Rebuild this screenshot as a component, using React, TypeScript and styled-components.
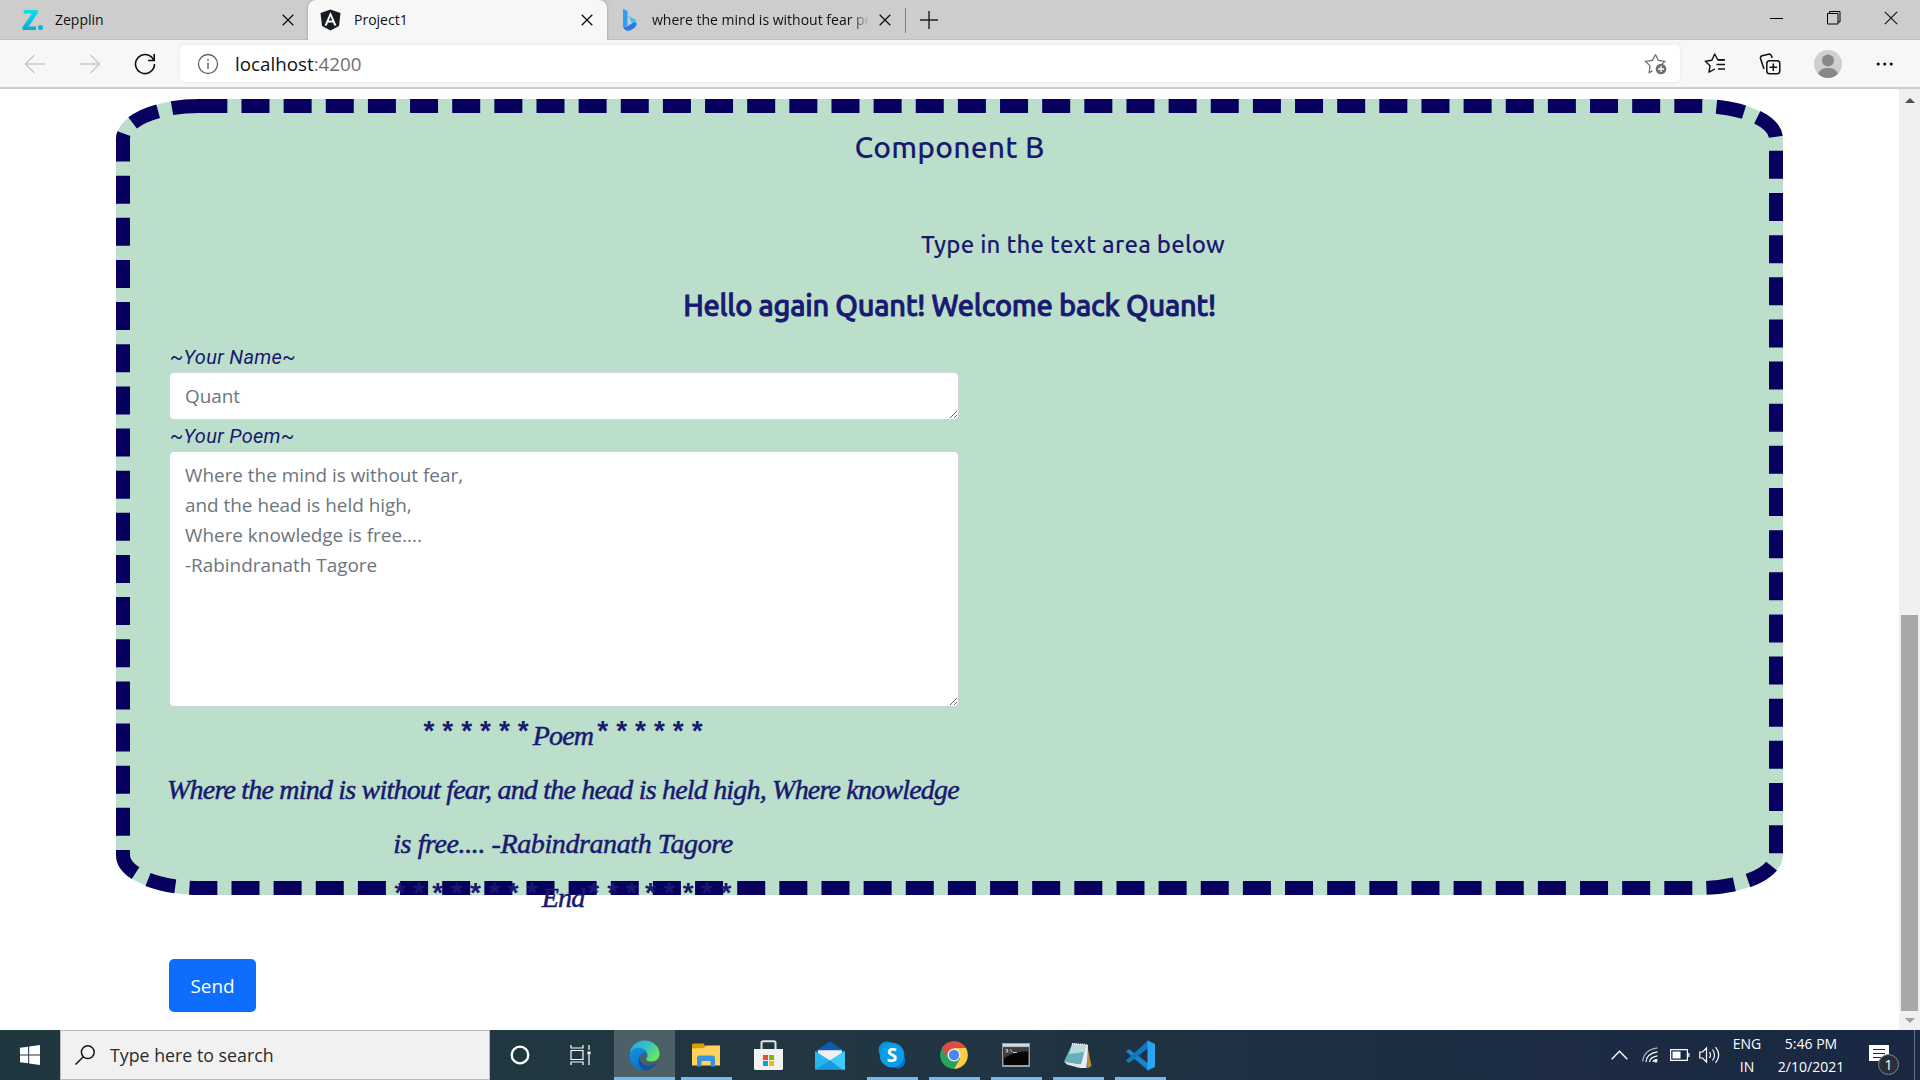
import React from "react";
import styled, { createGlobalStyle } from "styled-components";

const segoe = `"Segoe UI", "Open Sans", "Noto Sans", sans-serif`;
const ubuntu = `Ubuntu, "Noto Sans", sans-serif`;

const GlobalStyle = createGlobalStyle`
  *, *::before, *::after { box-sizing: border-box; }
  body { margin: 0; background: #fff; overflow: hidden; }
  svg { display: block; flex: none; }
`;

const Screen = styled.div`
  width: 1920px;
  height: 1080px;
  display: flex;
  flex-direction: column;
  overflow: hidden;
  font-family: ${segoe};
`;

/* ---------- Tab strip ---------- */

const TabStrip = styled.header`
  height: 40px;
  flex: none;
  display: flex;
  background: #cdcdcd;
  box-shadow: inset 0 -1px 0 #bdbdbd;
`;

const Tab = styled.div<{ $active?: boolean; $width: number; $padLeft: number }>`
  width: ${(p) => p.$width}px;
  height: 40px;
  display: flex;
  align-items: center;
  padding: 0 14px 0 ${(p) => p.$padLeft}px;
  border-radius: 8px 8px 0 0;
  color: #101010;
  background: ${(p) => (p.$active ? "#f7f7f7" : "transparent")};
  box-shadow: ${(p) => (p.$active ? "0 0 3px rgba(0,0,0,.3)" : "none")};
  clip-path: inset(-4px -4px 0 -4px);
`;

const TabTitle = styled.span<{ $fade?: boolean }>`
  flex: 1;
  min-width: 0;
  white-space: nowrap;
  font-size: 14px;
  line-height: 20px;
  mask-image: ${(p) => (p.$fade ? "linear-gradient(90deg, #000 200px, transparent 217px)" : "none")};
`;

const FavIcon = styled.div<{ $gap: number }>`
  margin-right: ${(p) => p.$gap}px;
`;

const TabDivider = styled.div`
  width: 1px;
  height: 25px;
  margin: 8px 14px 0 0;
  background: #7d7d7d;
`;

const NewTab = styled.div`
  margin-top: 11px;
`;

const WindowControls = styled.div`
  margin: 0 1px 0 auto;
  display: grid;
  grid-template-columns: repeat(3, 57px);
  height: 36px;
  place-items: center;
`;

/* ---------- Toolbar ---------- */

const Toolbar = styled.nav`
  height: 49px;
  flex: none;
  display: flex;
  align-items: flex-start;
  padding: 5px 20px 0 24px;
  background: #f7f7f7;
  border-bottom: 2px solid #cdcdcd;
`;

const NavButtons = styled.div`
  height: 37px;
  width: 156px;
  display: flex;
  align-items: center;
  gap: 33px;
`;

const AddressBar = styled.div`
  width: 1500px;
  height: 37px;
  display: flex;
  align-items: center;
  padding: 0 12px 0 17px;
  border-radius: 5px;
  background: #fff;
  box-shadow: 0 0 4px rgba(0, 0, 0, 0.08);
`;

const Url = styled.span`
  flex: 1;
  margin-left: 16px;
  font-size: 18.8px;
  line-height: 28px;
  color: #101010;
`;

const Port = styled.span`
  color: #6f6f6f;
`;

const ToolbarActions = styled.div`
  height: 37px;
  margin-left: 24px;
  display: grid;
  grid-template-columns: 22px 24px 28px 20px;
  column-gap: 32px;
  align-items: center;
  justify-items: end;
`;

/* ---------- Page ---------- */

const Viewport = styled.div`
  height: 941px;
  flex: none;
  display: flex;
  background: #fff;
`;

const Page = styled.main`
  flex: 1;
  padding: 10px 0 0 116px;
`;

const ComponentBox = styled.section`
  position: relative;
  isolation: isolate;
  width: 1667px;
  height: 796px;
  border: 14px solid transparent;
  border-radius: 5%;
  background: #bbdfca border-box;
  color: #191970;
`;

const DashedOutline = styled.svg`
  position: absolute;
  z-index: -1;
  inset: -14px;
`;

const Title = styled.h2`
  margin: 16px 0 0;
  text-align: center;
  font: 500 30px/36px ${ubuntu};
  letter-spacing: 0.2px;
`;

const Hint = styled.h4`
  margin: 65px 0 0 247px;
  text-align: center;
  font: 500 24px/30px ${ubuntu};
  letter-spacing: 0.2px;
`;

const Greeting = styled.h3`
  margin: 27px 0 0;
  text-align: center;
  font: 500 29px/36px ${ubuntu};
  letter-spacing: -0.27px;
  -webkit-text-stroke: 0.9px #191970;
`;

const Form = styled.form`
  width: 790px;
  margin: 18px 0 0 39px;
  display: flex;
  flex-direction: column;
`;

const Label = styled.label<{ $height: number }>`
  height: ${(p) => p.$height}px;
  display: flex;
  align-items: center;
  padding-left: 1px;
  font: italic 400 20px/24px Roboto, sans-serif;
  letter-spacing: 0.3px;
`;

const Field = styled.textarea<{ $height: number }>`
  display: block;
  width: 790px;
  height: ${(p) => p.$height}px;
  margin: 0;
  padding: 8px 15px;
  border: 1px solid #ced4da;
  border-radius: 5px;
  background: #fff;
  font: 400 18.9px/30px ${segoe};
  overflow: hidden;
  resize: both;
  &::placeholder { color: #6c757d; opacity: 1; }
`;

const Poem = styled.div`
  margin: 2px -10px 0;
  font: italic 400 28px/54px "Rancho", "Liberation Serif", serif;
  -webkit-text-stroke: 0.5px #191970;
`;

const PoemLine = styled.p<{ $spacing?: number }>`
  height: 54px;
  margin: 0 2px 0 0;
  display: flex;
  align-items: baseline;
  justify-content: center;
  gap: 4px;
  white-space: nowrap;
  letter-spacing: ${(p) => p.$spacing ?? -0.8}px;
`;

const Stars = styled.span`
  font: 700 28px/50px "Liberation Sans", sans-serif;
  letter-spacing: 0;
  word-spacing: 0.2px;
  -webkit-text-stroke: 0;
  transform: translateY(-5px);
`;

const SendButton = styled.button`
  width: 87px;
  height: 53px;
  margin: 34px 0 0;
  padding: 0;
  border: 0;
  border-radius: 5px;
  background: #0d6efd;
  color: #fff;
  font: 400 18.9px/30px ${segoe};
`;

const Scrollbar = styled.div`
  width: 21px;
  display: flex;
  flex-direction: column;
  align-items: center;
  padding: 9px 0 7px;
  background: #f0f0f0;
`;

const Arrow = styled.div<{ $down?: boolean }>`
  border: 5px solid transparent;
  border-top: ${(p) => (p.$down ? "5px solid #a0a0a0" : "0")};
  border-bottom: ${(p) => (p.$down ? "0" : "5px solid #505050")};
`;

const Thumb = styled.div`
  width: 17px;
  height: 396px;
  margin: auto 0 7px;
  background: #a8a8a8;
`;

/* ---------- Taskbar ---------- */

const Taskbar = styled.footer`
  height: 50px;
  flex: none;
  display: flex;
  align-items: stretch;
  color: #fff;
  background: linear-gradient(90deg, #20373f 0%, #213641 45%, #1d2d42 75%, #192743 100%);
`;

const Slot = styled.div<{ $width: number; $after?: number }>`
  width: ${(p) => p.$width}px;
  margin-right: ${(p) => p.$after ?? 0}px;
  display: grid;
  place-items: center;
`;

const SearchBox = styled.div`
  width: 430px;
  display: flex;
  align-items: center;
  padding-left: 14px;
  gap: 15px;
  background: #f1f1f1;
  border: 1px solid #b9b9b9;
  color: #2b2b2b;
  font-size: 17.8px;
`;

const AppTile = styled.div<{ $active?: boolean; $open?: boolean }>`
  width: ${(p) => (p.$active ? 61 : 62)}px;
  display: grid;
  place-items: center;
  background:
    ${(p) =>
      p.$open || p.$active
        ? `linear-gradient(#76b9ed, #76b9ed) center bottom / ${p.$active ? 61 : 51}px 3px no-repeat`
        : "none"},
    ${(p) => (p.$active ? "linear-gradient(#4d6068, #4d6068)" : "none")};
`;

const Tray = styled.div`
  margin-left: auto;
  display: flex;
`;

const TrayText = styled.div<{ $width: number }>`
  width: ${(p) => p.$width}px;
  padding-top: 2px;
  text-align: center;
  font-size: 14px;
  line-height: 23px;
`;

const Notifications = styled.div`
  position: relative;
  width: 61px;
  padding: 15px 0 0 16px;
`;

const Badge = styled.span`
  position: absolute;
  left: 25px;
  top: 24px;
  width: 21px;
  height: 21px;
  border: 1px solid #7f8790;
  border-radius: 50%;
  background: #2b2f38;
  text-align: center;
  font-size: 14px;
  line-height: 19px;
`;

const ShowDesktop = styled.div`
  width: 6px;
  border-left: 1px solid #66708a;
`;

const CloseIcon = ({ size = 12, stroke = 1.3 }: { size?: number; stroke?: number }) => (
  <svg width={size} height={size} viewBox="0 0 12 12" stroke="#101010" strokeWidth={stroke}>
    <path d="M.7.7l10.6 10.6M11.3.7L.7 11.3" />
  </svg>
);

const apps: { name: string; active?: boolean; open?: boolean; icon: React.ReactNode }[] = [
  {
    name: "Edge",
    active: true,
    open: true,
    icon: (
      <svg width="31" height="31" viewBox="0 0 31 31">
        <defs>
          <linearGradient id="edgeTop" x1="0" y1="0" x2="1" y2=".6">
            <stop offset="0" stopColor="#2aa7e0" />
            <stop offset=".55" stopColor="#35c1c8" />
            <stop offset="1" stopColor="#66eb5a" />
          </linearGradient>
          <linearGradient id="edgeLeft" x1="0" y1="0" x2=".4" y2="1">
            <stop offset="0" stopColor="#1993d8" />
            <stop offset="1" stopColor="#0675d2" />
          </linearGradient>
        </defs>
        <path d="M.8 13C2 5.500 8 .5 15.500 .5 24 .5 30.500 6.500 30.500 13.500c0 5-3.500 8-8 8-4 0-6-1.500-5-3 2.500-3 .5-8.500-5-9C7.500 9 3 10 .8 13z" fill="url(#edgeTop)" />
        <path d="M.6 15C1 10.500 5 7.800 9.500 7.800c5 0 9 3 9 7.200-1-2-3-2.500-4.500-2C9.500 15 9.500 25 18 28.500c1.500.8 1 1.500-2 1.600C7 30.500.1 23.500.6 15z" fill="url(#edgeLeft)" />
        <path d="M11.500 14.500c-3 5 1 10.500 7 11 4 .3 7.500-1.500 9.500-3.200-2 4.500-6.500 8-11.500 8.200C10.500 30 7 20 11.500 14.500z" fill="#0c55a6" />
      </svg>
    ),
  },
  {
    name: "File Explorer",
    open: true,
    icon: (
      <svg width="28" height="25" viewBox="0 0 28 25">
        <path d="M0 2a1.500 1.500 0 011.500-1.500h10L13.500 3v4H0z" fill="#dd9b08" />
        <path d="M0 5.500L12 5l2-2.500h14V22.500H0z" fill="#ffd35c" />
        <path d="M5 23.500V15q0-2.500 2.500-2.500h13Q23 12.500 23 15v8.500h-4.500V18h-9v5.500z" fill="#3b93dd" />
      </svg>
    ),
  },
  {
    name: "Microsoft Store",
    icon: (
      <svg width="29" height="31" viewBox="0 0 29 31">
        <path d="M7.500 12V2.800q0-1.600 1.600-1.600h10.800q1.600 0 1.600 1.600V12" fill="none" stroke="#e4e4e4" strokeWidth="2" />
        <path d="M0 9h29v19.500q0 1.500-1.500 1.500h-26Q0 30 0 28.500z" fill="#f2f2f2" />
        <path d="M9 15h5v5H9z" fill="#f04e23" />
        <path d="M15 15h5v5h-5z" fill="#7fba00" />
        <path d="M9 21h5v5H9z" fill="#00a3ee" />
        <path d="M15 21h5v5h-5z" fill="#ffb800" />
      </svg>
    ),
  },
  {
    name: "Mail",
    icon: (
      <svg width="30" height="29" viewBox="0 0 30 29">
        <path d="M0 10L15 .5 30 10v5H0z" fill="#0a5cb4" />
        <path d="M3 9.500h24V18L15 22 3 18z" fill="#f1f1f3" />
        <path d="M0 10l15 9.500L30 10v18.500H0z" fill="#2bb5ee" />
        <path d="M3 9.500h24L15 18.500z" fill="#f1f1f3" />
        <path d="M15 19.500L30 10v18.500h-3z" fill="#3fcaf8" />
        <path d="M0 28.500l15-9 12 9z" fill="#1c97e0" />
      </svg>
    ),
  },
  {
    name: "Skype",
    open: true,
    icon: (
      <svg width="28" height="28" viewBox="0 0 28 28">
        <circle cx="9" cy="9" r="8.500" fill="#078fd8" />
        <circle cx="19.500" cy="19.500" r="8" fill="#0a6fc8" />
        <circle cx="14" cy="14" r="12.300" fill="#0a9ee8" />
        <text x="14" y="21" textAnchor="middle" fontFamily="Open Sans" fontWeight="700" fontSize="19" fill="#fff">S</text>
      </svg>
    ),
  },
  {
    name: "Chrome",
    open: true,
    icon: (
      <svg width="28" height="28" viewBox="0 0 28 28">
        <path d="M14 14L2 7A14 14 0 0126 7z" fill="#dc4d41" />
        <path d="M2 7a14 14 0 0012 21l6-10.500-6-3.500z" fill="#27a35b" />
        <path d="M26 7a14 14 0 01-12 21l6-10.500L14 7z" fill="#fecd45" />
        <path d="M14 7h12A14 14 0 002 7l6 10.500z" fill="#dc4d41" />
        <circle cx="14" cy="14" r="6.500" fill="#f3f3f3" />
        <circle cx="14" cy="14" r="5.200" fill="#4b87f0" />
      </svg>
    ),
  },
  {
    name: "Command Prompt",
    open: true,
    icon: (
      <svg width="28" height="24" viewBox="0 0 28 24">
        <path d="M0 0h28v24H0z" fill="#9a9ea3" />
        <path d="M1 1h26v2.500H1z" fill="#d6dade" />
        <path d="M1.500 4.500h25v17.500h-25z" fill="#050505" />
        <path d="M1.500 4.500h25v4Q12 8 1.500 16z" fill="#3c3c3c" />
        <path d="M3.500 6.500h2v2.500h-2M7 7v.6M7 8.800v.6M8.500 6.200l1.600 3.200M11 9.500h4" fill="none" stroke="#d8d8d8" strokeWidth=".9" />
      </svg>
    ),
  },
  {
    name: "Notepad",
    open: true,
    icon: (
      <svg width="28" height="27" viewBox="0 0 28 27">
        <path d="M23 2l4.500 22-4 2.500L20 5z" fill="#b98a3c" />
        <path d="M9 1.500L24 3l-1.500 23L16 26z" fill="#e9eef0" />
        <path d="M8 2.500l14 1L17 22.500 0 19.500z" fill="#69aebb" />
        <path d="M8 2.500l14 1-1.800 6.500L5 12z" fill="#b4dade" />
        <path d="M0 19.500l17 3-1.500 3.500L3 22.500z" fill="#dfe9eb" />
        <path d="M8 1.800l14.500 1" stroke="#f5f5f5" strokeWidth="1.800" strokeDasharray="1.200 .8" />
      </svg>
    ),
  },
  {
    name: "Visual Studio Code",
    open: true,
    icon: (
      <svg width="30" height="31" viewBox="0 0 30 31">
        <path d="M1 11.500l2-2q.8-.6 1.700 0L24 24v6.500h-1L1 11.500z" fill="#1485cf" />
        <path d="M1 20.500l2 2q.8.6 1.700 0L24 7.500V.5h-1L1 20.500z" fill="#0f78c0" />
        <path d="M22.500.5L30 4v23l-7.500 3.500z" fill="#2aa5f2" />
      </svg>
    ),
  },
];

export default function App() {
  return (
    <Screen>
      <GlobalStyle />
      <TabStrip>
        <Tab $width={308} $padLeft={22}>
          <FavIcon $gap={11}>
            <svg width="22" height="22" viewBox="0 0 22 22">
              <defs>
                <linearGradient id="zGrad" x1="0" y1="0" x2="0" y2="1">
                  <stop offset="0" stopColor="#05e5e2" />
                  <stop offset="1" stopColor="#0aa9dc" />
                </linearGradient>
              </defs>
              <path d="M2 1h14v3L6.500 17.500H14V21H.5v-3L10 4.500H1.500z" fill="url(#zGrad)" />
              <circle cx="18.500" cy="18.500" r="2.500" fill="#0bb4dd" />
            </svg>
          </FavIcon>
          <TabTitle>Zepplin</TabTitle>
          <CloseIcon />
        </Tab>
        <Tab $active $width={299} $padLeft={12}>
          <FavIcon $gap={13}>
            <svg width="21" height="22" viewBox="0 0 21 22">
              <path d="M10.500.5l10 3.500-1.500 13-8.500 4.500L2 17 .5 4z" fill="#171b22" />
              <path d="M10.500 3L4.500 16.500h2.300l1.200-3h5l1.200 3h2.300zm0 4.300l1.700 4.300H8.800z" fill="#fff" />
            </svg>
          </FavIcon>
          <TabTitle>Project1</TabTitle>
          <CloseIcon />
        </Tab>
        <Tab $width={298} $padLeft={16}>
          <FavIcon $gap={15}>
            <svg width="14" height="24" viewBox="0 0 14 24">
              <path d="M0 1l4.500 1.800V17L1.500 20Q0 19 0 17z" fill="#2f9df4" />
              <path d="M5.500 8l6 3Q14 12.500 13.800 16q-.3 2.500-3 2L7.800 13z" fill="#35c5f0" />
              <path d="M0 17.500q1.500 3 4.500.5l6-3.500 3.300 1q-.5 3.500-4 5.500-3.500 2.500-6.500 1.500Q.5 21.500 0 17.500z" fill="#2a78ee" />
            </svg>
          </FavIcon>
          <TabTitle $fade>where the mind is without fear po</TabTitle>
          <CloseIcon />
        </Tab>
        <TabDivider />
        <NewTab>
          <svg width="18" height="18" viewBox="0 0 18 18" stroke="#202020" strokeWidth="1.400">
            <path d="M9 0v18M0 9h18" />
          </svg>
        </NewTab>
        <WindowControls>
          <svg width="13" height="13" viewBox="0 0 13 13" stroke="#000">
            <path d="M0 6.500h13" />
          </svg>
          <svg width="14" height="14" viewBox="0 0 14 14" fill="none" stroke="#000">
            <path d="M.5 2.500h10.500v10.500H.5zM2.500 2.500V.5h10.500v10.500h-2" />
          </svg>
          <CloseIcon size={14} stroke={1} />
        </WindowControls>
      </TabStrip>

      <Toolbar>
        <NavButtons>
          <svg width="22" height="20" viewBox="0 0 22 20" fill="none" stroke="#cacaca" strokeWidth="1.500">
            <path d="M21 10H1.500M10.500 1l-9 9 9 9" />
          </svg>
          <svg width="22" height="20" viewBox="0 0 22 20" fill="none" stroke="#cacaca" strokeWidth="1.500">
            <path d="M1 10h19.500M11.500 1l9 9-9 9" />
          </svg>
          <svg width="22" height="22" viewBox="0 0 22 22" fill="none" stroke="#101010" strokeWidth="1.600">
            <path d="M19.800 7.500A9.500 9.500 0 1020.500 11M20.200 1v6.500H14" />
          </svg>
        </NavButtons>
        <AddressBar>
          <svg width="22" height="22" viewBox="0 0 22 22" fill="none" stroke="#666" strokeWidth="1.300">
            <circle cx="11" cy="11" r="9.500" />
            <path d="M11 9.500v6.500M11 6v1.700" strokeWidth="1.500" />
          </svg>
          <Url>
            localhost<Port>:4200</Port>
          </Url>
          <svg width="24" height="24" viewBox="0 0 24 24" fill="none" stroke="#6e6e6e" strokeWidth="1.300">
            <path d="M11.500 2.500l2.900 6 6.300.9-3 3M8.500 18.800l-3.300 1.700.9-6.600L1.500 9.400l7-1 3-5.900" />
            <circle cx="17" cy="17" r="5.300" fill="#6e6e6e" stroke="none" />
            <path d="M17 14v6M14 17h6" stroke="#fff" />
          </svg>
        </AddressBar>
        <ToolbarActions>
          <svg width="22" height="22" viewBox="0 0 22 22" fill="none" stroke="#101010" strokeWidth="1.400">
            <path d="M20.500 6.800h-6.800L10.700 1 7.800 7.200 1.300 8.200 6 12.700l-1 6.500 6-3.200" strokeLinejoin="round" />
            <path d="M14 7h7M12.500 11.500H21M14 16h7" />
          </svg>
          <svg width="23" height="22" viewBox="0 0 23 22" fill="none" stroke="#101010" strokeWidth="1.500">
            <rect x="7.800" y="7.800" width="13" height="13" rx="2.800" />
            <path d="M14.300 10.500v7.600M10.500 14.300h7.600M5 16L1.500 5.500q-.5-2 1.500-2.700l6.500-1.600q2-.4 2.800 1.300l.9 2.500" />
          </svg>
          <svg width="28" height="28" viewBox="0 0 28 28">
            <circle cx="14" cy="14" r="14" fill="#d2d0ce" />
            <circle cx="14" cy="10.500" r="6" fill="#8a8886" />
            <path d="M4 23.800Q6 18 14 18t10 5.800Q20 28 14 28T4 23.800z" fill="#8a8886" />
          </svg>
          <svg width="18" height="4" viewBox="0 0 18 4" fill="#101010">
            <circle cx="2.200" cy="2" r="1.600" />
            <circle cx="8.700" cy="2" r="1.600" />
            <circle cx="15.200" cy="2" r="1.600" />
          </svg>
        </ToolbarActions>
      </Toolbar>

      <Viewport>
        <Page>
          <ComponentBox>
            <DashedOutline width="1667" height="796" viewBox="0 0 1667 796">
              <rect
                x="7"
                y="7"
                width="1653"
                height="782"
                rx="76.350"
                ry="32.800"
                fill="none"
                stroke="#08005e"
                strokeWidth="14"
                strokeDasharray="28 14.142"
              />
            </DashedOutline>
            <Title>Component B</Title>
            <Hint>Type in the text area below</Hint>
            <Greeting>Hello again Quant! Welcome back Quant!</Greeting>
            <Form>
              <Label $height={31}>~Your Name~</Label>
              <Field $height={48} readOnly placeholder="Quant" />
              <Label $height={31}>~Your Poem~</Label>
              <Field
                $height={256}
                readOnly
                placeholder={
                  "Where the mind is without fear,\nand the head is held high,\nWhere knowledge is free....\n-Rabindranath Tagore"
                }
              />
              <Poem>
                <PoemLine>
                  <Stars>* * * * * *</Stars>
                  <span>Poem</span>
                  <Stars>* * * * * *</Stars>
                </PoemLine>
                <PoemLine>Where the mind is without fear, and the head is held high, Where knowledge</PoemLine>
                <PoemLine $spacing={-0.4}>is free.... -Rabindranath Tagore</PoemLine>
                <PoemLine>
                  <Stars>* * * * * * * *</Stars>
                  <span>End</span>
                  <Stars>* * * * * * * *</Stars>
                </PoemLine>
              </Poem>
              <SendButton type="button">Send</SendButton>
            </Form>
          </ComponentBox>
        </Page>
        <Scrollbar>
          <Arrow />
          <Thumb />
          <Arrow $down />
        </Scrollbar>
      </Viewport>

      <Taskbar>
        <Slot $width={60}>
          <svg width="20" height="20" viewBox="0 0 20 20" fill="#fff">
            <path d="M0 2.800L8.200 1.700v7.800H0zM9.200 1.500L20 0v9.500H9.200zM0 10.500h8.200v7.800L0 17.200zM9.200 10.500H20V20L9.200 18.500z" />
          </svg>
        </Slot>
        <SearchBox>
          <svg width="20" height="20" viewBox="0 0 20 20" fill="none" stroke="#151515" strokeWidth="1.500">
            <circle cx="12.800" cy="7.200" r="6.400" />
            <path d="M8.300 11.700L.5 19.500" />
          </svg>
          Type here to search
        </SearchBox>
        <Slot $width={60}>
          <svg width="20" height="20" viewBox="0 0 20 20" fill="none" stroke="#fff" strokeWidth="2.300">
            <circle cx="10" cy="10" r="8.300" />
          </svg>
        </Slot>
        <Slot $width={60} $after={4}>
          <svg width="21" height="20" viewBox="0 0 21 20" fill="none" stroke="#fff" strokeWidth="1.200">
            <path d="M1 5.500h12v9H1zM1 0v3h12V0M1 20v-3h12v3M19 0v5M19 10v10" />
            <path d="M17.500 6.500h3v3h-3z" fill="#fff" stroke="none" />
          </svg>
        </Slot>
        {apps.map((app) => (
          <AppTile key={app.name} $active={app.active} $open={app.open} aria-label={app.name}>
            {app.icon}
          </AppTile>
        ))}
        <Tray>
          <Slot $width={30}>
            <svg width="17" height="10" viewBox="0 0 17 10" fill="none" stroke="#fff" strokeWidth="1.400">
              <path d="M.7 9.300l7.800-8 7.800 8" />
            </svg>
          </Slot>
          <Slot $width={31}>
            <svg width="16" height="16" viewBox="0 0 16 16" fill="none" stroke="#fff" strokeWidth="1.200">
              <path d="M.8 14.500Q1.500 3 15.500.8" opacity=".65" />
              <path d="M4 15Q4.500 6.500 15.500 4.800M7.500 15q.5-5 8-6.200M11 15q.3-2.500 4.500-2.500" />
              <circle cx="13.800" cy="14" r="1.600" fill="#fff" stroke="none" />
            </svg>
          </Slot>
          <Slot $width={29}>
            <svg width="20" height="12" viewBox="0 0 20 12" fill="none" stroke="#fff">
              <path d="M.6.6h16.800v10.800H.6zM18.800 4v4" strokeWidth="1.200" />
              <path d="M2.500 2.500h8v7h-8z" fill="#fff" stroke="none" />
            </svg>
          </Slot>
          <Slot $width={31}>
            <svg width="21" height="18" viewBox="0 0 21 18" fill="none" stroke="#fff" strokeWidth="1.200">
              <path d="M.8 6h2.700l4-4v14l-4-4H.8zM10.500 6q2 3 0 6M13.500 3.500q4 5.500 0 11M16.500 1.200q6.500 7.800 0 15.600" />
            </svg>
          </Slot>
          <TrayText $width={44}>
            ENG
            <br />
            IN
          </TrayText>
          <TrayText $width={84}>
            5:46 PM
            <br />
            2/10/2021
          </TrayText>
          <Notifications>
            <svg width="20" height="20" viewBox="0 0 20 20">
              <path d="M0 0h20v16h-6l-3.500 3.500V16H0z" fill="#fff" />
              <path d="M4 4.500h12M4 8.500h12M4 12.500h8" stroke="#1a2844" strokeWidth="1.200" />
            </svg>
            <Badge>1</Badge>
          </Notifications>
          <ShowDesktop />
        </Tray>
      </Taskbar>
    </Screen>
  );
}
